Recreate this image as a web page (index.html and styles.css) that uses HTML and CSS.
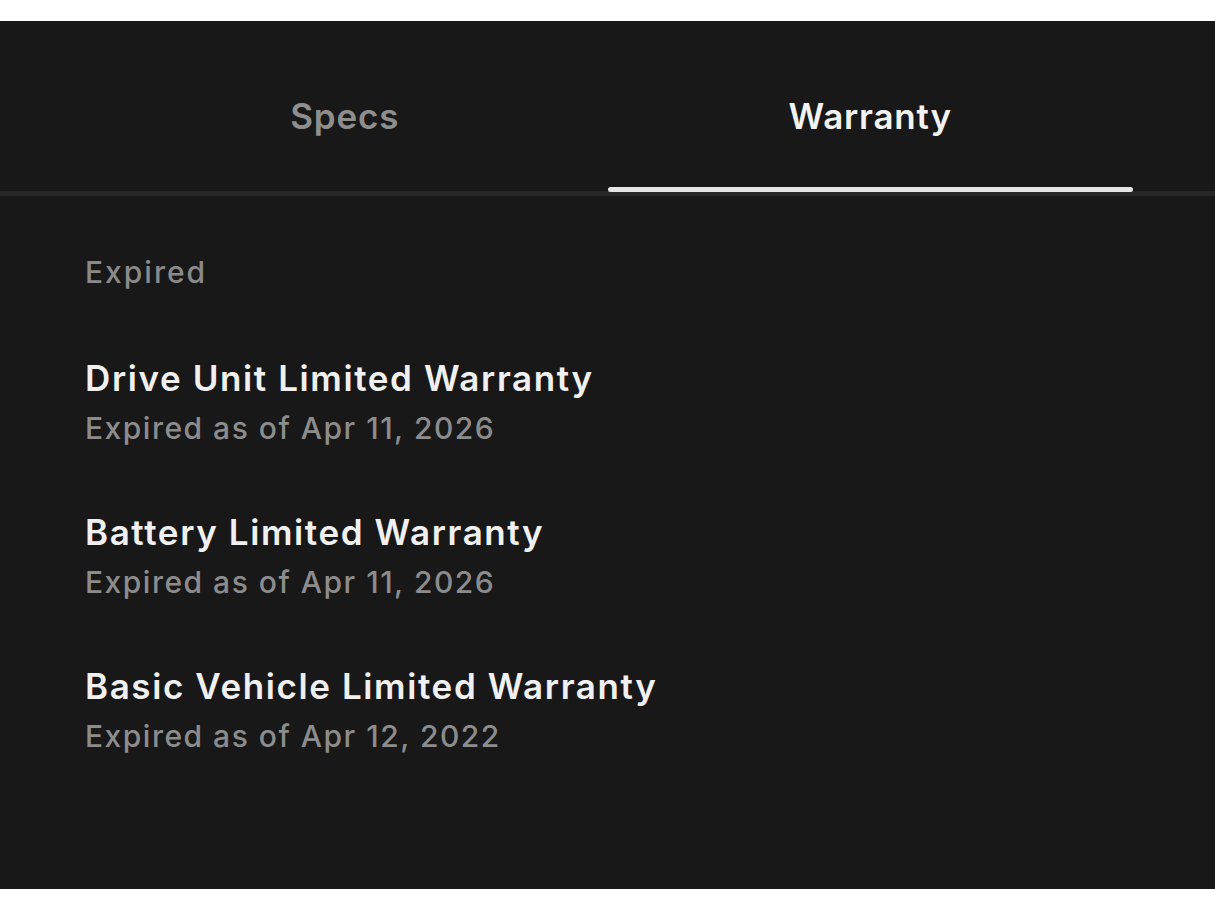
FILE: index.html
```html
<!DOCTYPE html>
<html>
<head>
<meta charset="utf-8">
<title>Warranty</title>
<link rel="stylesheet" href="styles.css">
</head>
<body>
    <div class="panel">
        <div class="tabs">
            <div class="tab">
                <span class="tab-label">Specs</span>
                <span class="tab-bar"></span>
            </div>
            <div class="tab active">
                <span class="tab-label">Warranty</span>
                <span class="tab-bar"></span>
            </div>
        </div>

        <div class="content">
            <div class="section-label">Expired</div>

            <div class="item">
                <div class="item-title">Drive Unit Limited Warranty</div>
                <div class="item-sub">Expired as of Apr 11, 2026</div>
            </div>
            <div class="item">
                <div class="item-title">Battery Limited Warranty</div>
                <div class="item-sub">Expired as of Apr 11, 2026</div>
            </div>
            <div class="item">
                <div class="item-title">Basic Vehicle Limited Warranty</div>
                <div class="item-sub">Expired as of Apr 12, 2022</div>
            </div>
        </div>
    </div>
</body>
</html>
```

FILE: styles.css
```css
body {
    margin: 0;
    background-color: #ffffff;
    font-family: Inter, "Noto Sans", Arial, sans-serif;
}

.panel {
    margin-top: 21px;
    height: 868px;
    background-color: #181818;
    overflow: hidden;
}

/* tab strip */
.tabs {
    display: flex;
    padding: 0 82px;
    border-bottom: 5px solid #262626;
}
.tab {
    flex: 1;
    display: flex;
    flex-direction: column;
    align-items: center;
}
.tab-label {
    padding-top: 75px;
    height: 40px;
    line-height: 40px;
    font-size: 35px;
    font-weight: 600;
    color: #8e8e8e;
    letter-spacing: 0.8px;
}
.tab-bar {
    margin-top: 51px;
    margin-bottom: -1px;
    width: 100%;
    height: 5px;
    border-radius: 3px;
}
.tab.active .tab-label {
    color: #f2f2f2;
}
.tab.active .tab-bar {
    background: #e4e4e4;
}

/* warranty list */
.content {
    padding: 56px 85px 0;
}
.section-label {
    font-size: 30px;
    line-height: 40px;
    color: #8a8a8a;
    font-weight: 500;
    letter-spacing: 2px;
    margin-bottom: 62px;
}
.item {
    margin-bottom: 54px;
}
.item-title {
    font-size: 35px;
    line-height: 48px;
    font-weight: 600;
    color: #f0f0f0;
    letter-spacing: 1.6px;
}
.item-sub {
    font-size: 30px;
    line-height: 52px;
    font-weight: 500;
    color: #8c8c8c;
    letter-spacing: 1.5px;
}
```
